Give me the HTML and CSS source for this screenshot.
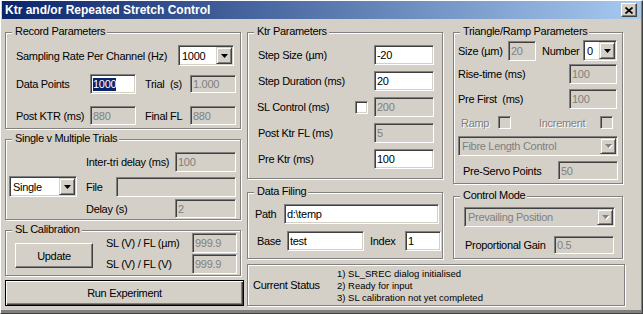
FILE: index.html
```html
<!DOCTYPE html>
<html>
<head>
<meta charset="utf-8">
<link rel="stylesheet" href="styles.css">
</head>
<body>
<div class="window">
  <div class="titlebar">
    <span class="title">Ktr and/or Repeated Stretch Control</span>
    <span class="close"><svg width="8" height="7" viewBox="0 0 8 7"><path d="M0.5 0.5L7.5 6.5M7.5 0.5L0.5 6.5" stroke="#000" stroke-width="1.7"/></svg></span>
  </div>
  <div class="body">
    <div class="col-left">
      <div class="group g-rec">
        <span class="cap">Record Parameters</span>
        <div class="row rec-r1">
          <span class="rec-l1">Sampling Rate Per Channel (Hz)</span>
          <div class="sel w56"><span class="val">1000</span><span class="dd"><svg width="7" height="4" viewBox="0 0 7 4"><path d="M0 0H7L3.5 4Z"/></svg></span></div>
        </div>
        <div class="row rec-r2">
          <span class="rec-la">Data Points</span>
          <div class="in w46"><span class="hl">1000</span></div>
          <span class="rec-lb">Trial&nbsp; (s)</span>
          <div class="in dis w46 h18">1.000</div>
        </div>
        <div class="row rec-r3">
          <span class="rec-la">Post KTR (ms)</span>
          <div class="in dis w46 h19">880</div>
          <span class="rec-lb">Final FL</span>
          <div class="in dis w46 h19">880</div>
        </div>
      </div>

      <div class="group g-single">
        <span class="cap">Single v Multiple Trials</span>
        <div class="row sg-r1">
          <span class="sg-l">Inter-tri delay (ms)</span>
          <div class="in dis w61">100</div>
        </div>
        <div class="row sg-r2">
          <div class="sel w68"><span class="val">Single</span><span class="dd"><svg width="7" height="4" viewBox="0 0 7 4"><path d="M0 0H7L3.5 4Z"/></svg></span></div>
          <span class="sg-file">File</span>
          <div class="in dis w120"></div>
        </div>
        <div class="row sg-r3">
          <span class="sg-l">Delay (s)</span>
          <div class="in dis w61 h19">2</div>
        </div>
      </div>

      <div class="group g-sl">
        <span class="cap">SL Calibration</span>
        <div class="sl-row">
          <div class="btn sl-upd">Update</div>
          <div class="sl-col">
            <div class="row sl-r">
              <span class="sl-l">SL (V) / FL (µm)</span>
              <div class="in dis w45">999.9</div>
            </div>
            <div class="row sl-r sl-r2">
              <span class="sl-l">SL (V) / FL (V)</span>
              <div class="in dis w45">999.9</div>
            </div>
          </div>
        </div>
      </div>

      <div class="btn btn-default run">Run Experiment</div>
    </div>

    <div class="col-right">
      <div class="top-row">
        <div class="col-mid">
          <div class="group g-ktr">
            <span class="cap">Ktr Parameters</span>
            <div class="row ktr-r">
              <span class="ktr-l">Step Size (µm)</span>
              <div class="in w60">-20</div>
            </div>
            <div class="row ktr-r">
              <span class="ktr-l">Step Duration (ms)</span>
              <div class="in w60">20</div>
            </div>
            <div class="row ktr-r">
              <span class="ktr-l ktr-lc">SL Control (ms)</span>
              <span class="cb ktr-cb"></span>
              <div class="in dis w60">200</div>
            </div>
            <div class="row ktr-r">
              <span class="ktr-l">Post Ktr FL (ms)</span>
              <div class="in dis w60">5</div>
            </div>
            <div class="row ktr-r">
              <span class="ktr-l">Pre Ktr (ms)</span>
              <div class="in w60">100</div>
            </div>
          </div>

          <div class="group g-data">
            <span class="cap">Data Filing</span>
            <div class="row df-r1">
              <span class="df-path">Path</span>
              <div class="in w155">d:\temp</div>
            </div>
            <div class="row df-r2">
              <span class="df-base">Base</span>
              <div class="in w77">test</div>
              <span class="df-index">Index</span>
              <div class="in w36">1</div>
            </div>
          </div>
        </div>

        <div class="col-tri">
          <div class="group g-tri">
            <span class="cap">Triangle/Ramp Parameters</span>
            <div class="row tr-r1">
              <span class="tr-size">Size (µm)</span>
              <div class="in dis w28">20</div>
              <span class="tr-num">Number</span>
              <div class="sel w34"><span class="val">0</span><span class="dd"><svg width="7" height="4" viewBox="0 0 7 4"><path d="M0 0H7L3.5 4Z"/></svg></span></div>
            </div>
            <div class="row tr-r2">
              <span class="tr-l">Rise-time (ms)</span>
              <div class="in dis w48">100</div>
            </div>
            <div class="row tr-r3">
              <span class="tr-l">Pre First&nbsp; (ms)</span>
              <div class="in dis w48">100</div>
            </div>
            <div class="row tr-r4">
              <span class="tr-ramp disabled">Ramp</span>
              <span class="cb dis"></span>
              <span class="tr-inc disabled">Increment</span>
              <span class="cb dis"></span>
            </div>
            <div class="row tr-r5">
              <div class="sel dis w160"><span class="val">Fibre Length Control</span><span class="dd"><svg width="7" height="4" viewBox="0 0 7 4"><path d="M0 0H7L3.5 4Z"/></svg></span></div>
            </div>
            <div class="row tr-r6">
              <span class="tr-pre">Pre-Servo Points</span>
              <div class="in dis w60 h19">50</div>
            </div>
          </div>

          <div class="group g-ctrl">
            <span class="cap">Control Mode</span>
            <div class="row cm-r1">
              <div class="sel dis w151"><span class="val">Prevailing Position</span><span class="dd"><svg width="7" height="4" viewBox="0 0 7 4"><path d="M0 0H7L3.5 4Z"/></svg></span></div>
            </div>
            <div class="row cm-r2">
              <span class="cm-l">Proportional Gain</span>
              <div class="in dis w60 h18">0.5</div>
            </div>
          </div>
        </div>
      </div>

      <div class="group status">
        <span class="st-l">Current Status</span>
        <div class="st-lines">
          <div>1) SL_SREC dialog initialised</div>
          <div>2) Ready for input</div>
          <div>3) SL calibration not yet completed</div>
        </div>
      </div>
    </div>
  </div>
</div>
</body>
</html>
```

FILE: styles.css
```css
* { box-sizing: border-box; margin: 0; padding: 0; }
body {
  margin: 0;
  background: #d4d0c8;
  font-family: "Liberation Sans", Arial, sans-serif;
  font-size: 11px;
  letter-spacing: -0.3px;
  color: #000;
}
.window {
  width: 643px;
  height: 314px;
  background: #d4d0c8;
  border-top: 1px solid #fff;
  border-left: 1px solid #fff;
  border-right: 1px solid #404040;
  border-bottom: 1px solid #404040;
  box-shadow: inset -1px -1px #808080, inset 0 -3px #808080;
  overflow: hidden;
}
.titlebar {
  height: 18px;
  margin: 0 1px;
  padding: 0 4px 0 3px;
  background: linear-gradient(to right, #0a246a, #a6caf0);
  display: flex;
  align-items: center;
  justify-content: space-between;
}
.title { color: #fff; font-weight: bold; font-size: 12px; letter-spacing: 0; white-space: nowrap; }
.close {
  width: 16px;
  height: 14px;
  background: #d4d0c8;
  border: 1px solid;
  border-color: #fff #404040 #404040 #fff;
  box-shadow: inset -1px -1px #808080;
  display: flex;
  align-items: center;
  justify-content: center;
}
.close svg { display: block; }

.body { display: flex; padding-left: 4px; }
.col-left { width: 239px; display: flex; flex-direction: column; }
.col-right { margin-left: 3px; display: flex; flex-direction: column; }
.top-row { display: flex; }
.col-mid { width: 196px; display: flex; flex-direction: column; }
.col-tri { width: 170px; margin-left: 10px; display: flex; flex-direction: column; }

.group {
  position: relative;
  border: 1px solid #808080;
  box-shadow: inset 1px 1px #fff, 1px 1px #fff;
  display: flex;
  flex-direction: column;
}
.cap {
  position: absolute;
  top: -9px;
  left: 6px;
  padding: 0 2px 0 3px;
  line-height: 14px;
  background: #d4d0c8;
  white-space: nowrap;
}
.row { display: flex; align-items: center; white-space: nowrap; }

/* inputs */
.in {
  height: 20px;
  border: 1px solid;
  border-color: #808080 #fff #fff #808080;
  box-shadow: inset 1px 1px #404040, inset -1px -1px #d4d0c8;
  background: #fff;
  padding-left: 2px;
  display: flex;
  align-items: center;
  flex: none;
  overflow: hidden;
}
.in.dis { background: #d4d0c8; color: #808080; }
.h18 { height: 18px; }
.h19 { height: 19px; }
.hl { background: #0a246a; color: #fff; line-height: 13px; }

.sel {
  height: 21px;
  border: 1px solid;
  border-color: #808080 #fff #fff #808080;
  box-shadow: inset 1px 1px #404040, inset -1px -1px #d4d0c8;
  background: #fff;
  padding: 1px;
  display: flex;
  flex: none;
}
.sel .val { flex: 1; display: flex; align-items: center; padding-left: 2px; overflow: hidden; }
.sel.dis { background: #d4d0c8; color: #808080; }
.dd {
  width: 16px;
  flex: none;
  background: #d4d0c8;
  border: 1px solid;
  border-color: #d4d0c8 #404040 #404040 #d4d0c8;
  box-shadow: inset 1px 1px #fff, inset -1px -1px #808080;
  display: flex;
  align-items: center;
  justify-content: center;
}
.dd svg { display: block; fill: #000; }
.sel.dis .dd svg { fill: #808080; filter: drop-shadow(1px 1px 0 #fff); }

.cb {
  width: 13px;
  height: 13px;
  flex: none;
  border: 1px solid;
  border-color: #808080 #fff #fff #808080;
  box-shadow: inset 1px 1px #404040, inset -1px -1px #d4d0c8;
  background: #fff;
}
.cb.dis { background: #d4d0c8; }
.disabled { color: #808080; text-shadow: 1px 1px 0 #fff; }

.btn {
  background: #d4d0c8;
  border: 1px solid;
  border-color: #fff #404040 #404040 #fff;
  box-shadow: inset -1px -1px #808080;
  display: flex;
  align-items: center;
  justify-content: center;
  white-space: nowrap;
}
.btn-default {
  border: 1px solid #000;
  box-shadow: inset 1px 1px #fff, inset -1px -1px #404040, inset -2px -2px #808080;
}

/* widths */
.w28 { width: 28px; }
.w34 { width: 34px; }
.w36 { width: 36px; }
.w45 { width: 45px; }
.w46 { width: 46px; }
.w48 { width: 48px; }
.w56 { width: 56px; }
.w60 { width: 60px; }
.w61 { width: 61px; }
.w68 { width: 68px; }
.w77 { width: 77px; }
.w120 { width: 120px; }
.w151 { width: 151px; }
.w155 { width: 155px; }
.w160 { width: 160px; }

/* Record Parameters */
.g-rec { width: 236px; height: 97px; margin-top: 13px; }
.rec-r1 { margin-top: 12px; height: 21px; padding-left: 10px; }
.rec-l1 { width: 162px; }
.rec-r2 { margin-top: 8px; height: 20px; padding-left: 10px; }
.rec-r3 { margin-top: 12px; height: 19px; padding-left: 10px; }
.rec-la { width: 74px; }
.rec-lb { width: 45px; margin-left: 9px; }

/* Single v Multiple */
.g-single { width: 236px; height: 81px; margin-top: 10px; }
.sg-r1 { margin-top: 12px; height: 20px; padding-left: 80px; }
.sg-l { width: 89px; }
.sg-r2 { margin-top: 4px; height: 21px; padding-left: 3px; }
.sg-file { width: 30px; margin-left: 9px; }
.sg-r3 { margin-top: 2px; height: 19px; padding-left: 80px; }

/* SL Calibration */
.g-sl { width: 236px; height: 46px; margin-top: 10px; }
.sl-row { display: flex; align-items: flex-start; }
.sl-upd { width: 78px; height: 25px; margin-left: 9px; margin-top: 12px; }
.sl-col { margin-left: 13px; margin-top: 2px; display: flex; flex-direction: column; }
.sl-r { height: 20px; }
.sl-r2 { margin-top: 1px; }
.sl-l { width: 86px; }

.run { width: 239px; height: 26px; margin-top: 4px; }

/* Ktr Parameters */
.g-ktr { width: 196px; height: 147px; margin-top: 13px; padding-top: 6px; }
.ktr-r { margin-top: 6px; height: 20px; padding-left: 10px; }
.ktr-l { width: 116px; }
.ktr-lc { width: 97px; margin-left: -1px; }
.ktr-cb { margin-left: 1px; margin-right: 6px; }

/* Data Filing */
.g-data { width: 196px; height: 67px; margin-top: 13px; }
.df-r1 { margin-top: 11px; height: 20px; padding-left: 7px; }
.df-path { width: 29px; }
.df-r2 { margin-top: 6px; height: 21px; padding-left: 9px; }
.df-base { width: 30px; }
.df-index { width: 35px; margin-left: 6px; }

/* Triangle/Ramp */
.g-tri { width: 170px; height: 152px; margin-top: 13px; }
.tr-r1 { margin-top: 7px; height: 21px; padding-left: 4px; }
.tr-size { width: 50px; }
.tr-num { width: 41px; margin-left: 6px; }
.tr-r2 { margin-top: 3px; height: 20px; padding-left: 4px; }
.tr-r3 { margin-top: 5px; height: 20px; padding-left: 4px; }
.tr-l { width: 111px; }
.tr-r4 { margin-top: 5px; height: 17px; padding-left: 7px; }
.tr-ramp { width: 37px; }
.tr-inc { width: 61px; margin-left: 28px; }
.tr-r5 { margin-top: 5px; height: 20px; padding-left: 4px; }
.tr-r5 .sel, .cm-r1 .sel { height: 20px; }
.tr-r6 { margin-top: 5px; height: 19px; padding-left: 9px; }
.tr-pre { width: 95px; }

/* Control Mode */
.g-ctrl { width: 170px; height: 63px; margin-top: 12px; }
.cm-r1 { margin-top: 10px; height: 20px; padding-left: 10px; }
.cm-r2 { margin-top: 9px; height: 18px; padding-left: 11px; }
.cm-l { width: 89px; }

/* Status */
.status {
  width: 378px;
  height: 42px;
  margin-top: 5px;
  flex-direction: row;
  align-items: center;
}
.st-l { width: 89px; padding-left: 5px; }
.st-lines { font-size: 9.5px; letter-spacing: 0; line-height: 12px; padding-top: 2px; }
```
